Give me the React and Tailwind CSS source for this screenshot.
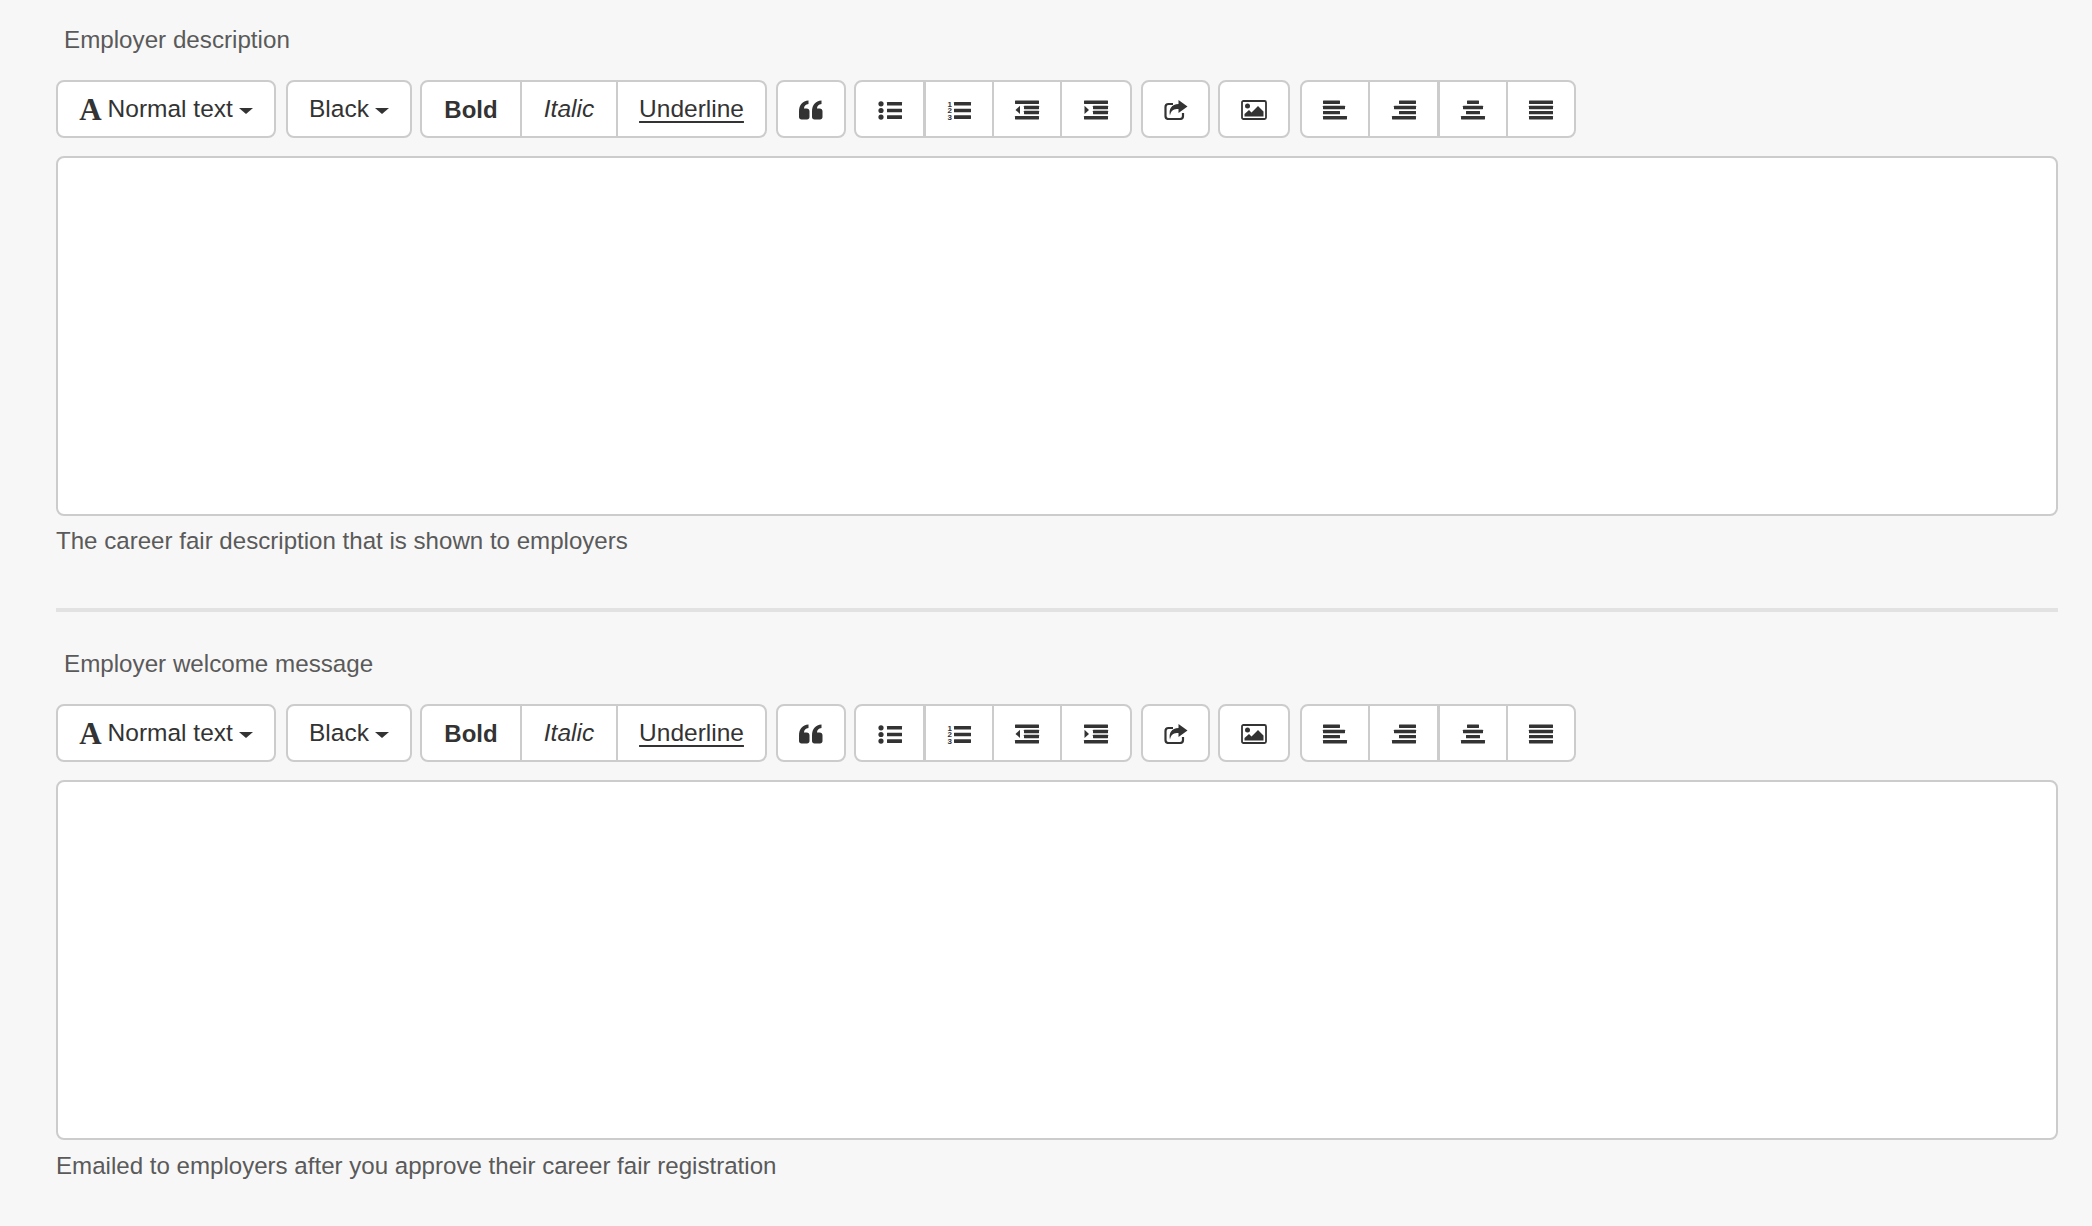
import React from "react";

const Bars = ({ bars, children, barHeight = 3.4 }) => (
    <svg width="24" height="20" viewBox="0 0 24 20" fill="#333" className="overflow-visible">
        {bars.map(([x, y, w], i) => (
            <rect key={i} x={x} y={y} width={w} height={barHeight} rx="0.4" />
        ))}
        {children}
    </svg>
);

const QuoteIcon = () => (
    <svg width="24" height="20" viewBox="0 0 24 20" fill="#333">
        <path d="M0 11.500C0 5 3.500 1 9.500 0.500V4C6.500 4.500 5 6 5 8.500H7.500C9.500 8.500 10.500 9.500 10.500 11.500V17C10.500 18.500 9.500 19.500 8 19.500H2.500C1 19.500 0 18.500 0 17Z" />
        <path d="M13 11.500C13 5 16.500 1 22.500 0.500V4C19.500 4.500 18 6 18 8.500H20.500C22.500 8.500 23.500 9.500 23.500 11.500V17C23.500 18.500 22.500 19.500 21 19.500H15.500C14 19.500 13 18.500 13 17Z" />
    </svg>
);

const ListUlIcon = () => (
    <Bars barHeight={3.6} bars={[[9, 2, 15], [9, 8.700, 15], [9, 15.300, 15]]}>
        <circle cx="3" cy="3.800" r="2.600" />
        <circle cx="3" cy="10.500" r="2.600" />
        <circle cx="3" cy="17.100" r="2.600" />
    </Bars>
);

const ListOlIcon = () => (
    <Bars barHeight={3.6} bars={[[7, 2, 17], [7, 8.700, 17], [7, 15.300, 17]]}>
        <text x="0.500" y="6.800" fontSize="8" fontWeight="700" fontFamily="Liberation Sans, sans-serif">1</text>
        <text x="0.500" y="13" fontSize="8" fontWeight="700" fontFamily="Liberation Sans, sans-serif">2</text>
        <text x="0.500" y="19.500" fontSize="8" fontWeight="700" fontFamily="Liberation Sans, sans-serif">3</text>
    </Bars>
);

const OutdentIcon = () => (
    <Bars bars={[[0, 0.600, 24], [9, 5.800, 15], [9, 10.800, 15], [0, 16, 24]]}>
        <path d="M5 5.800V14.100L0.500 9.900Z" />
    </Bars>
);

const IndentIcon = () => (
    <Bars bars={[[0, 0.600, 24], [9, 5.800, 15], [9, 10.800, 15], [0, 16, 24]]}>
        <path d="M0.500 5.800V14.100L5 9.900Z" />
    </Bars>
);

const ShareIcon = () => (
    <svg width="24" height="20" viewBox="0 0 24 20" fill="none">
        <path d="M19 13V16C19 18 18 19 16 19H4.500C2.500 19 1.500 18 1.500 16V7C1.500 5 2.500 4 4.500 4H9" stroke="#333" strokeWidth="2.200" />
        <path d="M14.500 0L23.500 6.500L14.500 13V9C10 9 7 10 6 15.500C4.500 9 7.500 4.200 14.500 4Z" fill="#333" />
    </svg>
);

const ImageIcon = () => (
    <svg width="26" height="20" viewBox="0 0 26 20" fill="none">
        <rect x="1" y="1" width="24" height="18" rx="1.500" stroke="#333" strokeWidth="1.800" />
        <circle cx="6.500" cy="6" r="2.500" fill="#333" />
        <path d="M3.500 16.500V14L8 10L10.500 12.500L17 6L22.500 11.500V16.500Z" fill="#333" />
    </svg>
);

const AlignLeftIcon = () => <Bars bars={[[0, 0.600, 17], [0, 5.800, 22], [0, 10.900, 17], [0, 16, 24]]} />;
const AlignRightIcon = () => <Bars bars={[[7, 0.600, 17], [2, 5.800, 22], [7, 10.900, 17], [0, 16, 24]]} />;
const AlignCenterIcon = () => <Bars bars={[[6, 0.600, 12], [2, 5.800, 20], [5, 10.900, 14], [0, 16, 24]]} />;
const AlignJustifyIcon = () => <Bars bars={[[0, 0.600, 24], [0, 5.800, 24], [0, 10.900, 24], [0, 16, 24]]} />;

const Caret = () => (
    <span className="ml-[6px] inline-block w-0 h-0 border-x-[7px] border-x-transparent border-t-[6px] border-t-[#333] mt-[3px]" />
);

function Toolbar() {
    const btn = "h-full flex items-center justify-center pt-[1px]";
    const group = "h-full flex bg-white border-2 border-[#ccc] rounded-lg overflow-hidden shrink-0";

    return (
        <div className="h-[58px] flex text-[24.5px] text-[#333]">
            <div className={`${group} w-[220px]`}>
                <div className={`${btn} w-full`}>
                    <span className="font-['Liberation_Serif',serif] font-bold text-[31px] mr-[6px] leading-none">A</span>
                    <span>Normal text</span>
                    <Caret />
                </div>
            </div>

            <div className={`${group} w-[126px] ml-[10px]`}>
                <div className={`${btn} w-full`}>
                    <span>Black</span>
                    <Caret />
                </div>
            </div>

            <div className={`${group} w-[347px] ml-[8px]`}>
                <div className={`${btn} w-[98px] font-bold text-[24px]`}>Bold</div>
                <div className={`${btn} w-[96px] italic border-l-2 border-[#ccc]`}>Italic</div>
                <div className={`${btn} flex-1 border-l-2 border-[#ccc]`}>
                    <span className="underline underline-offset-[4px]">Underline</span>
                </div>
            </div>

            <div className={`${group} w-[70px] ml-[9px]`}>
                <div className={`${btn} w-full`}><QuoteIcon /></div>
            </div>

            <div className={`${group} w-[278px] ml-[8px]`}>
                <div className={`${btn} w-[67px]`}><ListUlIcon /></div>
                <div className={`${btn} w-[69px] border-l-[3px] border-[#ccc]`}><ListOlIcon /></div>
                <div className={`${btn} w-[68px] border-l-2 border-[#ccc]`}><OutdentIcon /></div>
                <div className={`${btn} flex-1 border-l-2 border-[#ccc]`}><IndentIcon /></div>
            </div>

            <div className={`${group} w-[69px] ml-[9px]`}>
                <div className={`${btn} w-full`}><ShareIcon /></div>
            </div>

            <div className={`${group} w-[72px] ml-[8px]`}>
                <div className={`${btn} w-full`}><ImageIcon /></div>
            </div>

            <div className={`${group} w-[276px] ml-[10px]`}>
                <div className={`${btn} w-[66px]`}><AlignLeftIcon /></div>
                <div className={`${btn} w-[69px] border-l-2 border-[#ccc]`}><AlignRightIcon /></div>
                <div className={`${btn} w-[69px] border-l-[3px] border-[#ccc]`}><AlignCenterIcon /></div>
                <div className={`${btn} flex-1 border-l-2 border-[#ccc]`}><AlignJustifyIcon /></div>
            </div>
        </div>
    );
}

function EditorField({ label, helper, helperGap }) {
    return (
        <div>
            <div className="pl-2 h-[40px] flex items-center text-[24.2px] text-[#5a5a5a]">{label}</div>
            <div className="mt-[20px]">
                <Toolbar />
            </div>
            <div className="mt-[18px] h-[360px] bg-white border-2 border-[#ccc] rounded-lg" />
            <div className={`${helperGap} h-[30px] flex items-center text-[24.1px] text-[#5a5a5a]`}>{helper}</div>
        </div>
    );
}

export default function App() {
    return (
        <div className="w-[2092px] h-[1226px] overflow-hidden bg-[#f7f7f7] pl-[56px] pr-[34px] pt-[20px] font-['Liberation_Sans',sans-serif]">
            <EditorField
                label="Employer description"
                helper="The career fair description that is shown to employers"
                helperGap="mt-[10px]"
            />

            <div className="mt-[52px] mb-[32px] h-1 bg-[#e2e2e2]" />

            <EditorField
                label="Employer welcome message"
                helper="Emailed to employers after you approve their career fair registration"
                helperGap="mt-[11px]"
            />
        </div>
    );
}
